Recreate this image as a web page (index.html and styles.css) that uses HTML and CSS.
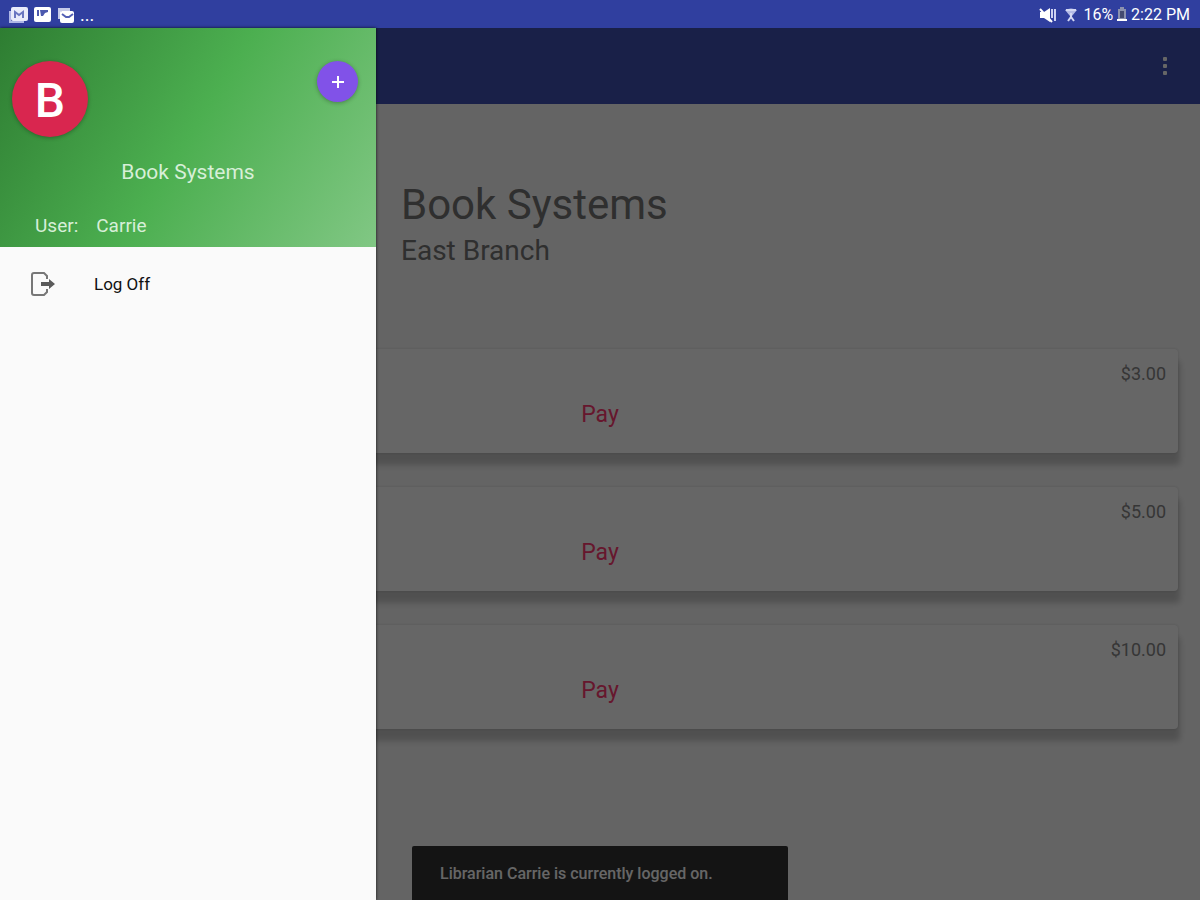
FILE: index.html
```html
<!DOCTYPE html>
<html lang="en">
<head>
  <meta charset="UTF-8" />
  <meta name="viewport" content="width=device-width, initial-scale=1.0" />
  <title>Book Systems</title>
  <link rel="stylesheet" href="styles.css">
</head>
<body>
  <div class="status-bar">
    <div class="notifications">
      <svg width="20" height="18" viewBox="0 0 20 18">
        <path d="M3 5H1v12h15v-2H3z" fill="#aeb6e6"/>
        <rect x="3" y="1" width="17" height="14" rx="2" fill="#e9ebfa"/>
        <path d="M7 12V6l4 3 4-3v6" fill="none" stroke="#6a76c0" stroke-width="2"/>
      </svg>
      <svg width="17" height="15" viewBox="0 0 17 15">
        <rect width="17" height="15" rx="2" fill="#fff"/>
        <path d="M3 3h2v6H3zM6 3h8v2l-3 1-2 3H7z" fill="#4c59ae"/>
      </svg>
      <svg width="17" height="16" viewBox="0 0 17 16">
        <path d="M1 1h12v3H4v8H1z" fill="#c5cae9"/>
        <rect x="3" y="4" width="14" height="12" rx="2" fill="#fff"/>
        <path d="M5 7l4 3h3l4-3" fill="none" stroke="#5360b5" stroke-width="2"/>
      </svg>
      <span class="more-notifications">...</span>
    </div>
    <div class="system-info">
      <svg class="mute" width="18" height="16" viewBox="0 0 18 16">
        <path d="M1 5h4l6-4v14l-6-4H1z" fill="#fff"/>
        <path d="M1 2l12 13" stroke="#fff" stroke-width="2"/>
        <path d="M13 2v9M16 2v12" stroke="#cdd2f2" stroke-width="2"/>
      </svg>
      <svg class="wifi" width="12" height="14" viewBox="0 0 12 14">
        <path d="M0 2q6-3 12 0L7 8H5z" fill="#b4bbe6"/>
        <path d="M1 2h10M3 13l3-4 3 4M6 5v4" fill="none" stroke="#d3d7f3" stroke-width="2"/>
      </svg>
      <span>16%</span>
      <svg width="10" height="15" viewBox="0 0 10 15">
        <path d="M3 0h4v2h2v12H1V2h2z" fill="#8b91ae"/>
        <path d="M3 4h4v7H3z" fill="#444a70"/>
        <path d="M0 12h10v2H0z" fill="#fff"/>
      </svg>
      <span class="clock">2:22 PM</span>
    </div>
  </div>

  <div class="screen">
    <header class="app-bar">
      <button class="menu-button" aria-label="More options">
        <svg width="6" height="20" viewBox="0 0 6 20">
          <rect x="1" y="1" width="4" height="4" rx="1"/>
          <rect x="1" y="8" width="4" height="4" rx="1"/>
          <rect x="1" y="15" width="4" height="4" rx="1"/>
        </svg>
      </button>
    </header>

    <main>
      <div class="library">
        <div class="library-name">
          <h1>Book Systems</h1>
          <p>East Branch</p>
        </div>
      </div>
      <div class="payments">
        <section class="card">
          <span class="amount">$3.00</span>
          <button class="pay">Pay</button>
        </section>
        <section class="card">
          <span class="amount">$5.00</span>
          <button class="pay">Pay</button>
        </section>
        <section class="card">
          <span class="amount">$10.00</span>
          <button class="pay">Pay</button>
        </section>
      </div>
    </main>

    <div class="snackbar" role="status">Librarian Carrie is currently logged on.</div>
    <div class="scrim"></div>

    <nav class="drawer">
      <div class="drawer-header">
        <div class="drawer-top">
          <span class="avatar">B</span>
          <button class="add-button" aria-label="Add">
            <svg width="12" height="12" viewBox="0 0 12 12">
              <path d="M6 0v12M0 6h12" stroke="#fff" stroke-width="2"/>
            </svg>
          </button>
        </div>
        <p class="drawer-title">Book Systems</p>
        <p class="user"><span>User:</span><span>Carrie</span></p>
      </div>
      <a class="drawer-item" href="#">
        <svg width="26" height="26" viewBox="0 0 26 26">
          <path d="M17 8V5l-3-3H4q-2 0-2 2v18q0 2 2 2h10l3-3v-3" fill="none" stroke="#777" stroke-width="2"/>
          <path d="M11 11h8V8l6 5-6 5v-3h-8z" fill="#5a5a5a"/>
        </svg>
        <span>Log Off</span>
      </a>
    </nav>
  </div>
</body>
</html>
```

FILE: styles.css
```css
* {
  box-sizing: border-box;
}
body {
  margin: 0;
  height: 100vh;
  display: flex;
  flex-direction: column;
  font-family: Roboto, sans-serif;
  overflow: hidden;
}
h1, p {
  margin: 0;
  font-weight: 400;
}
button {
  border: none;
  background: none;
  padding: 0;
  font-family: inherit;
  cursor: pointer;
}
svg {
  display: block;
}
.status-bar {
  display: flex;
  justify-content: space-between;
  align-items: center;
  height: 28px;
  padding: 1px 10px 0 8px;
  background: #303f9f;
  color: #fff;
  font-size: 16px;
}
.notifications {
  display: flex;
  align-items: center;
  gap: 6px;
}
.more-notifications {
  font-size: 18px;
}
.system-info {
  display: flex;
  align-items: center;
  gap: 4px;
}
.mute {
  margin-right: 4px;
}
.wifi {
  margin-right: 2px;
}
.screen {
  position: relative;
  flex: 1;
  background: #fafafa;
}
.app-bar {
  display: flex;
  justify-content: flex-end;
  align-items: center;
  height: 76px;
  padding-right: 32px;
  background: #3f51b5;
}
.menu-button svg {
  fill: #fff;
}
.library {
  display: grid;
  grid-template-columns: 1fr 2fr;
  padding: 73px 0 80px;
}
.library-name {
  grid-column: 2;
  padding-left: 1px;
  color: #757575;
}
.library-name h1 {
  font-size: 42px;
  line-height: 56px;
}
.library-name p {
  font-size: 28px;
  line-height: 36px;
}
.payments {
  display: flex;
  flex-direction: column;
  gap: 34px;
  padding: 0 22px;
}
.card {
  display: flex;
  flex-direction: column;
  height: 104px;
  padding: 13px 12px;
  background: #fff;
  border-radius: 4px;
  box-shadow: 2px 12px 6px rgba(0, 0, 0, 0.2), 0 0 3px rgba(0, 0, 0, 0.15);
}
.amount {
  align-self: flex-end;
  color: #888;
  font-size: 18px;
  line-height: 24px;
}
.pay {
  align-self: center;
  margin-top: 13px;
  color: #ff3a72;
  font-size: 23px;
  line-height: 32px;
}
.snackbar {
  position: absolute;
  bottom: 0;
  left: 50%;
  transform: translateX(-50%);
  width: 376px;
  padding: 17px 28px 15px;
  background: #323232;
  border-radius: 2px 2px 0 0;
  color: #fff;
  font-size: 16px;
  font-weight: 500;
  line-height: 22px;
}
.scrim {
  position: absolute;
  inset: 0;
  background: rgba(0, 0, 0, 0.6);
}
.drawer {
  position: absolute;
  top: 0;
  bottom: 0;
  left: 0;
  width: 376px;
  background: #fafafa;
  box-shadow: 0 0 3px rgba(0, 0, 0, 0.8);
}
.drawer-header {
  padding: 33px 18px 8px 12px;
  background: linear-gradient(122deg, #2e7d32, #4caf50 50%, #81c784);
  color: #d7efd8;
}
.drawer-top {
  display: flex;
  justify-content: space-between;
  align-items: flex-start;
}
.avatar {
  width: 76px;
  height: 76px;
  border-radius: 50%;
  background: #d9264f;
  color: #fff;
  font-size: 48px;
  font-weight: 500;
  line-height: 80px;
  text-align: center;
  box-shadow: 0 1px 4px rgba(0, 0, 0, 0.3);
}
.add-button {
  display: flex;
  justify-content: center;
  align-items: center;
  width: 41px;
  height: 41px;
  border-radius: 50%;
  background: #8152e8;
  box-shadow: 0 1px 4px rgba(0, 0, 0, 0.3);
}
.drawer-title {
  margin-top: 20px;
  padding-left: 6px;
  font-size: 21px;
  line-height: 30px;
  text-align: center;
}
.user {
  display: flex;
  gap: 18px;
  margin-top: 26px;
  padding-left: 23px;
  font-size: 19px;
  line-height: 26px;
}
.drawer-item {
  display: flex;
  align-items: center;
  gap: 38px;
  margin-top: 12px;
  padding: 12px 30px;
  color: #111;
  font-size: 17px;
  text-decoration: none;
}
```
